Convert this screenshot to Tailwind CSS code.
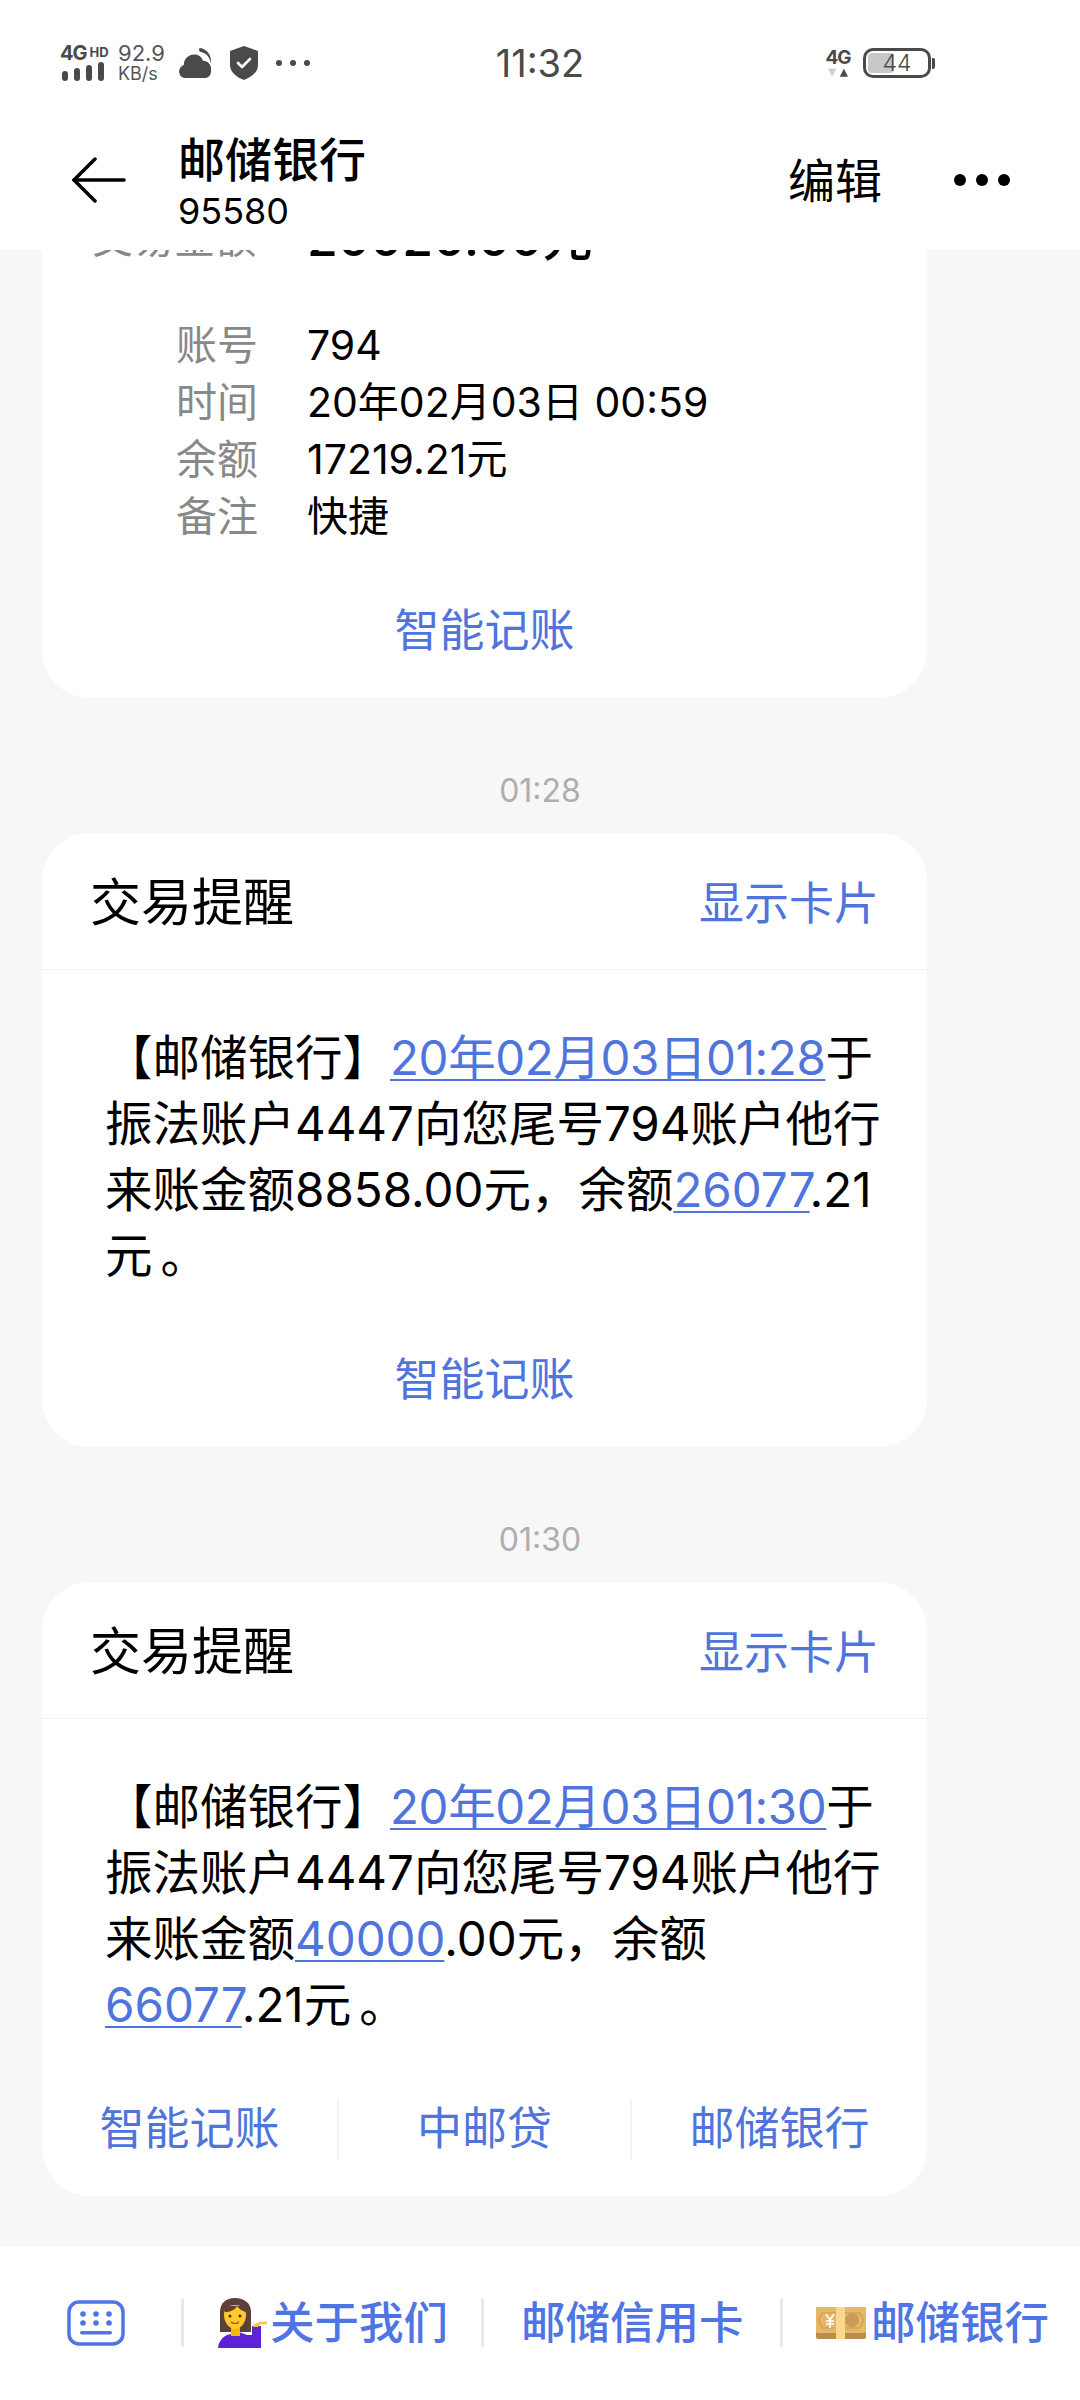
<!DOCTYPE html>
<html lang="zh-CN">
<head>
    <meta charset="UTF-8">
    <meta name="viewport" content="width=device-width, initial-scale=1.0">
    <title>邮储银行 95580</title>
    <script src="https://cdn.jsdelivr.net/npm/@tailwindcss/browser@4"></script>
</head>
<body class="bg-white">
    <div class="w-[1080px] h-[2400px] flex flex-col overflow-hidden bg-[#f7f7f7] text-black font-[Inter,'Noto_Sans_CJK_SC',sans-serif]">

        <!-- status bar -->
        <div class="bg-white h-[110px] shrink-0 grid grid-cols-[1fr_auto_1fr] items-center pt-[16px] text-[#4a4a4a]">
            <div class="flex items-center pl-[60px]">
                <div class="w-[46px] flex flex-col">
                    <div class="flex items-start h-[15px] leading-[15px] font-bold">
                        <span class="text-[20px] tracking-[-1px]">4G</span>
                        <span class="text-[13px] leading-[12px] ml-[3px]">HD</span>
                    </div>
                    <svg class="mt-[1px]" width="46" height="19" viewBox="0 0 46 19" fill="#4a4a4a">
                        <rect x="2" y="9" width="6" height="10" rx="3"/>
                        <rect x="14" y="6" width="6" height="13" rx="3"/>
                        <rect x="26" y="3" width="6" height="16" rx="3"/>
                        <rect x="38" y="0" width="6" height="19" rx="3"/>
                    </svg>
                </div>
                <div class="ml-[12px] w-[48px] flex flex-col text-[#555]">
                    <span class="text-[22px] leading-[21px]">92.9</span>
                    <span class="text-[18px] leading-[19px]">KB/s</span>
                </div>
                <svg class="ml-[12px]" width="36" height="32" viewBox="0 0 36 34" fill="#4a4a4a">
                    <path d="M22 1c8 1 13 8 12 17-1-7-5-12-12-13-1-2 -1-3 0-4z"/>
                    <path d="M7 33c-4 0-7-3-7-7 0-3 2-6 5-7 0-6 5-11 11-11 4 0 8 2 9 6 1 1 2 1 3 1 3 1 6 4 6 8v3c0 4-3 7-7 7z"/>
                </svg>
                <svg class="ml-[15px]" width="30" height="34" viewBox="0 0 30 34">
                    <path d="M15 0 29 5v14c0 7-6 12-14 15C7 31 1 26 1 19V5z" fill="#4a4a4a"/>
                    <path d="M9 17l4 4 8-8" fill="none" stroke="#fff" stroke-width="2.6" stroke-linecap="round" stroke-linejoin="round"/>
                </svg>
                <div class="ml-[17px] flex gap-[8px]">
                    <span class="w-[6px] h-[6px] rounded-full bg-[#4a4a4a]"></span>
                    <span class="w-[6px] h-[6px] rounded-full bg-[#4a4a4a]"></span>
                    <span class="w-[6px] h-[6px] rounded-full bg-[#4a4a4a]"></span>
                </div>
            </div>
            <div class="text-[38px] leading-none text-[#4a4a4a]">11:32</div>
            <div class="flex items-center justify-end pr-[145px]">
                <div class="w-[24px] flex flex-col items-center">
                    <span class="text-[19px] leading-[20px] font-bold tracking-[-1px]">4G</span>
                    <svg width="20" height="10" viewBox="0 0 22 10">
                        <path d="M0 0h9L4.500 9z" fill="#d0d0d0"/>
                        <path d="M13 9h9L17.500 0z" fill="#4a4a4a"/>
                    </svg>
                </div>
                <div class="ml-[13px] relative w-[68px] h-[30px] rounded-[10px] border-[3px] border-[#4a4a4a] p-[2px]">
                    <div class="w-[26px] h-full rounded-[4px] bg-[#c8c8c8]"></div>
                    <span class="absolute inset-0 flex items-center justify-center text-[23px] leading-none font-light text-[#4a4a4a]">44</span>
                </div>
                <div class="ml-[1px] w-[3px] h-[11px] rounded-r-[2px] bg-[#4a4a4a]"></div>
            </div>
        </div>

        <!-- title bar -->
        <div class="bg-white h-[140px] shrink-0 flex items-center relative z-10">
            <svg class="ml-[72px]" width="54" height="46" viewBox="0 0 54 46" fill="none" stroke="#000" stroke-width="3.500" stroke-linecap="round" stroke-linejoin="round">
                <path d="M23 2 2 23l21 21"/>
                <path d="M2 23h50"/>
            </svg>
            <div class="ml-[52px] pt-[6px] flex flex-col">
                <span class="text-[47px] leading-[52px] font-medium">邮储银行</span>
                <span class="mt-[3px] text-[36px] leading-[44px]">95580</span>
            </div>
            <span class="ml-auto text-[47px] leading-none">编辑</span>
            <div class="ml-[72px] mr-[70px] flex gap-[10px]">
                <span class="w-[12px] h-[12px] rounded-full bg-black"></span>
                <span class="w-[12px] h-[12px] rounded-full bg-black"></span>
                <span class="w-[12px] h-[12px] rounded-full bg-black"></span>
            </div>
        </div>

        <!-- messages, scrolled so the first card is cut by the title bar -->
        <div class="flex-1 overflow-hidden px-[42px]">
            <div class="w-[885px] bg-white rounded-[48px] -mt-[40px]">
                <div class="h-[57px] flex items-center">
                    <span class="w-[265px] pl-[50px] text-[41px] text-[#888]">交易金额</span>
                    <span class="text-[50px] font-medium">20020.00元</span>
                </div>
                <div class="mt-[50px] flex flex-col text-[41px] leading-[57px]">
                    <div class="flex"><span class="w-[265px] pl-[134px] text-[#888]">账号</span><span>794</span></div>
                    <div class="flex"><span class="w-[265px] pl-[134px] text-[#888]">时间</span><span>20年02月03日 00:59</span></div>
                    <div class="flex"><span class="w-[265px] pl-[134px] text-[#888]">余额</span><span>17219.21元</span></div>
                    <div class="flex"><span class="w-[265px] pl-[134px] text-[#888]">备注</span><span>快捷</span></div>
                </div>
                <div class="mt-[19px] h-[134px] flex items-center justify-center text-[45px] text-[#4f74dc]">智能记账</div>
            </div>

            <div class="h-[135px] flex items-center justify-center pt-[50px] text-[32px] text-[#aeaeae]">01:28</div>

            <div class="w-[885px] bg-white rounded-[48px]">
                <div class="h-[137px] pt-[5px] flex items-center justify-between pl-[48px] pr-[48px] border-b border-[#f3f3f3]">
                    <span class="text-[51px]">交易提醒</span>
                    <span class="text-[45px] text-[#4f74dc]">显示卡片</span>
                </div>
                <p class="pt-[55px] pl-[63px] text-[47.500px] leading-[66px] whitespace-nowrap">【邮储银行】<a class="text-[#4f74dc] underline decoration-[2px] underline-offset-[4px] tracking-[-0.4px]">20年02月03日01:28</a>于<br>振法账户4447向您尾号794账户他行<br>来账金额8858.00元，余额<a class="text-[#4f74dc] underline decoration-[2px] underline-offset-[4px]">26077</a>.21<br>元<span class="ml-[8px]">。</span></p>
                <div class="mt-[24px] h-[134px] flex items-center justify-center text-[45px] text-[#4f74dc]">智能记账</div>
            </div>

            <div class="h-[135px] flex items-center justify-center pt-[50px] text-[32px] text-[#aeaeae]">01:30</div>

            <div class="w-[885px] bg-white rounded-[48px]">
                <div class="h-[137px] pt-[5px] flex items-center justify-between pl-[48px] pr-[48px] border-b border-[#f3f3f3]">
                    <span class="text-[51px]">交易提醒</span>
                    <span class="text-[45px] text-[#4f74dc]">显示卡片</span>
                </div>
                <p class="pt-[55px] pl-[63px] text-[47.500px] leading-[66px] whitespace-nowrap">【邮储银行】<a class="text-[#4f74dc] underline decoration-[2px] underline-offset-[4px] tracking-[-0.4px]">20年02月03日01:30</a>于<br>振法账户4447向您尾号794账户他行<br>来账金额<a class="text-[#4f74dc] underline decoration-[2px] underline-offset-[4px]">40000</a>.00元，余额<br><a class="text-[#4f74dc] underline decoration-[2px] underline-offset-[4px]">66077</a>.21元<span class="ml-[8px]">。</span></p>
                <div class="mt-[24px] h-[134px] grid grid-cols-3 items-center text-[45px] text-[#4f74dc] text-center">
                    <span>智能记账</span>
                    <span class="border-l-2 border-r-2 border-[#f3f3f3] leading-[60px]">中邮贷</span>
                    <span>邮储银行</span>
                </div>
            </div>
        </div>

        <!-- quick menu -->
        <div class="bg-white h-[154px] shrink-0 flex items-center text-[44.500px] font-medium text-[#4f74e4] whitespace-nowrap">
            <svg class="ml-[67px]" width="58" height="46" viewBox="0 0 58 46" fill="#4f74e4">
                <rect x="2" y="2" width="54" height="42" rx="10" fill="none" stroke="#4f74e4" stroke-width="3.500"/>
                <circle cx="16" cy="14" r="2.800"/><circle cx="29" cy="14" r="2.800"/><circle cx="42" cy="14" r="2.800"/>
                <circle cx="16" cy="23" r="2.800"/><circle cx="29" cy="23" r="2.800"/><circle cx="42" cy="23" r="2.800"/>
                <rect x="13" y="31" width="32" height="3.500" rx="1.750"/>
            </svg>
            <span class="ml-[56px] w-[3px] h-[48px] bg-[#e8e8e8]"></span>
            <svg class="ml-[33px]" width="50" height="50" viewBox="0 0 50 50">
                <path d="M3 14C3 5 9 0 18 0s16 5 16 14v20H3z" fill="#5d4037"/>
                <path d="M1 50c1-9 7-13 13-14l8-2 8 3 5 0 0-9 9 0 0 22z" fill="#5c22d6"/>
                <rect x="14" y="26" width="9" height="12" fill="#f5b800"/>
                <path d="M7 17c0-7 5-10 11-10s11 3 11 10-5 14-11 14S7 24 7 17z" fill="#ffca28"/>
                <path d="M8 14c5 0 10-2 12-6 2 3 5 5 9 6V8H8z" fill="#5d4037"/>
                <circle cx="13" cy="18" r="1.500" fill="#40302a"/><circle cx="23" cy="18" r="1.500" fill="#40302a"/>
                <path d="M14 24c2 2 6 2 8 0" fill="none" stroke="#8d4e2a" stroke-width="1.200"/>
                <path d="M36 27l6-3 8-.5c1 0 1 2.500 0 2.500l-7 .5-2 2.500h-5z" fill="#f7c548"/>
            </svg>
            <span class="ml-[3px]">关于我们</span>
            <span class="ml-[33px] w-[3px] h-[48px] bg-[#e8e8e8]"></span>
            <span class="ml-[37px] w-[223px]">邮储信用卡</span>
            <span class="ml-[36px] w-[3px] h-[48px] bg-[#e8e8e8]"></span>
            <svg class="ml-[33px]" width="50" height="32" viewBox="0 0 50 32">
                <rect width="50" height="32" rx="2" fill="#b98d4f"/>
                <rect width="50" height="26" rx="2" fill="#e8b766"/>
                <path d="M6 6h38l3 6v2l-3 7H6l-3-7v-2z" fill="none" stroke="#c9994f" stroke-width="1.200"/>
                <circle cx="36" cy="13" r="7" fill="#c99c5b"/>
                <path d="M10 7l4 6 4-6M14 13v8M10 14h8M10 17h8" fill="none" stroke="#fff" stroke-width="1.600"/>
                <rect x="20" width="9" height="32" fill="#fcd88f"/>
            </svg>
            <span class="ml-[5px]">邮储银行</span>
        </div>
    </div>
</body>
</html>
